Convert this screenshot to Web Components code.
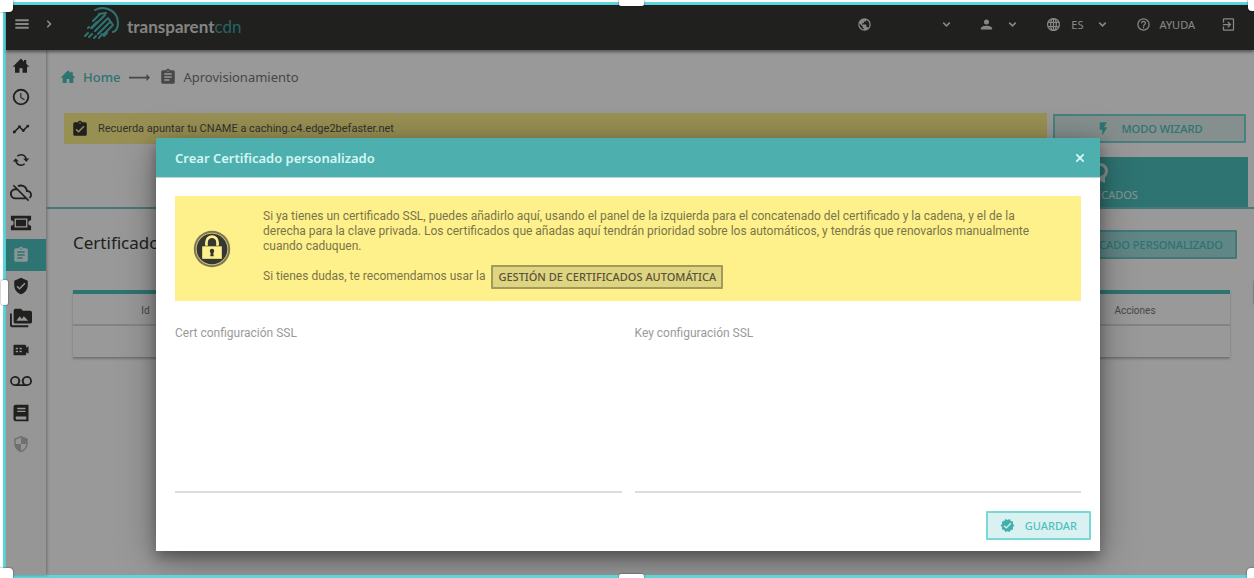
<!DOCTYPE html>
<html lang="es">
<head>
<meta charset="utf-8">
<meta name="viewport" content="width=device-width, initial-scale=1">
<title>Aprovisionamiento - transparentcdn</title>
<style>
html,body{margin:0;height:100%}
body{font-family:Roboto,"Noto Sans",sans-serif;background:#fff}
</style>
</head>
<body>
<cdn-app></cdn-app>
<script>
const ICONS={
menu:'<path d="M2 19h20v-3H2v3zm0-5.500h20v-3H2v3zM2 5v3h20V5H2z"/>',
right:'<path d="M8 16.600 12.600 12 8 7.400 10 5.400l6.600 6.600-6.600 6.600z"/>',
down:'<path d="M7 7.600 12 12.600l5-5 2 2-7 7-7-7z"/>',
home:'<path d="M10 21v-6h4v6h6v-8h3L19 9V4h-3v2.200L12 2 1 13h3v8z"/>',
clock:'<path d="M12 1a11 11 0 1 0 0 22 11 11 0 0 0 0-22zm0 19.500a8.500 8.500 0 1 1 0-17 8.500 8.500 0 0 1 0 17zm.5-14H11v6.500l5.200 3.200.8-1.300-4.500-2.700z"/>',
line:'<path d="M23 8a2 2 0 0 1-2.500 1.900L17 13.500a2 2 0 1 1-3.900 0L10.500 11a2 2 0 0 1-1 0L5 15.500A2 2 0 1 1 3.500 14L8 9.500a2 2 0 1 1 3.900 0l2.600 2.600a2 2 0 0 1 1 0L19 8.500A2 2 0 1 1 23 8z"/>',
sync:'<path d="M12 6a6 6 0 0 1 5.700 4H15l4 4.500 4-4.500h-3.200A8 8 0 0 0 6.500 6.200L8 7.600A6 6 0 0 1 12 6zM5 9.500 1 14h3.200a8 8 0 0 0 13.300 3.800L16 16.400A6 6 0 0 1 6.300 14H9z"/>',
cloudoff:'<path d="M19.400 10A7.500 7.500 0 0 0 8 5.100l1.500 1.500A5.500 5.500 0 0 1 17.500 11v1H19a3 3 0 0 1 1.500 5.600l1.400 1.400A5 5 0 0 0 19.400 10zM3 5.300 5.800 8A6 6 0 0 0 6 20h11.700l2 2 1.300-1.300L4.300 4zM7.700 10l8 8H6a4 4 0 0 1 0-8z"/>',
ticket:'<path d="M1 4h22v5a3 3 0 0 0 0 6v5H1v-5a3 3 0 0 0 0-6zm4 3v10h14V7zm1.500 1.500h11v7h-11z" fill-rule="evenodd"/>',
clip:'<path d="M19 3h-4.200a3 3 0 0 0-5.600 0H5a2 2 0 0 0-2 2v14c0 1.100.9 2 2 2h14a2 2 0 0 0 2-2V5a2 2 0 0 0-2-2zm-7 0a1 1 0 1 1 0 2 1 1 0 0 1 0-2zm2 14H7v-2h7zm3-4H7v-2h10zm0-4H7V7h10z"/>',
clipcheck:'<path d="M19 3h-4.200a3 3 0 0 0-5.600 0H5a2 2 0 0 0-2 2v14c0 1.100.9 2 2 2h14a2 2 0 0 0 2-2V5a2 2 0 0 0-2-2zm-7 0a1 1 0 1 1 0 2 1 1 0 0 1 0-2zm-2 14-4-4 1.400-1.400 2.600 2.600 6.600-6.600L18 9z"/>',
shield:'<path d="M12 1 3 5v6c0 5.500 3.800 10.700 9 12 5.200-1.300 9-6.500 9-12V5zm-2 16-4-4 1.400-1.400 2.600 2.600 6.600-6.600L18 9z"/>',
folders:'<path d="M2 7H0v13c0 1.100.9 2 2 2h18v-2H2zm20-3h-8l-2-2H6a2 2 0 0 0-2 2v12c0 1.100.9 2 2 2h16a2 2 0 0 0 2-2V6a2 2 0 0 0-2-2zM7 15l3.500-5 2.500 3 2-3 5 5z"/>',
video:'<path d="M3 5h14a2 2 0 0 1 2 2v2l3-2v10l-3-2v2a2 2 0 0 1-2 2H3a1 1 0 0 1-1-1V6a1 1 0 0 1 1-1zm2 4v2h3V9zm0 4v2h3v-2zm5-4v2h3V9zm0 4v2h3v-2z" fill-rule="evenodd"/>',
voice:'<path d="M18.500 6.500a5.500 5.500 0 0 0-4.400 9H9.900a5.500 5.500 0 1 0-4.400 2h13a5.500 5.500 0 0 0 0-11zm-13 9a3.500 3.500 0 1 1 0-7 3.500 3.500 0 0 1 0 7zm13 0a3.500 3.500 0 1 1 0-7 3.500 3.500 0 0 1 0 7z"/>',
book:'<path d="M5 1h17v22H5a3 3 0 0 1-3-3V4a3 3 0 0 1 3-3zm2 4v2h11V5zm0 4v1.500h11V9zM5 16.500v4h14v-4z" fill-rule="evenodd"/>',
quarter:'<path d="M12 1 3 5v6c0 5.500 3.800 10.700 9 12 5.200-1.300 9-6.500 9-12V5zm0 11h7c-.5 4.100-3.300 7.800-7 8.900V12H5V6.300l7-3.100z"/>',
earth:'<path d="M12 2a10 10 0 1 0 0 20 10 10 0 0 0 0-20zm-1 17.900A8 8 0 0 1 4.200 10.200L9 15v1c0 1.100.9 2 2 2zm6.900-2.500A2 2 0 0 0 16 16h-1v-3a1 1 0 0 0-1-1H8v-2h2a1 1 0 0 0 1-1V7h2a2 2 0 0 0 2-2v-.4a8 8 0 0 1 2.900 12.800z"/>',
person:'<path d="M12 12a4 4 0 1 0 0-8 4 4 0 0 0 0 8zm0 2c-3 0-9 1.300-9 4v2h18v-2c0-2.700-6-4-9-4z"/>',
globe:'<g fill="none" stroke="currentColor" stroke-width="2"><circle cx="12" cy="12" r="9.500"/><ellipse cx="12" cy="12" rx="4.500" ry="9.500"/><path d="M3 8.500h18M3 15.500h18M12 3v18"/></g>',
help:'<path d="M11 18h2v-2h-2zm1-16a10 10 0 1 0 0 20 10 10 0 0 0 0-20zm0 18a8 8 0 1 1 0-16 8 8 0 0 1 0 16zm0-14a4 4 0 0 0-4 4h2a2 2 0 1 1 4 0c0 2-3 1.800-3 5h2c0-2.300 3-2.500 3-5a4 4 0 0 0-4-4z"/>',
exit:'<path d="M10 15.600 11.500 17l5-5-5-5L10 8.400l2.700 2.600H3v2h9.700zM19 2H5a2 2 0 0 0-2 2v5h2V4h14v16H5v-5H3v5c0 1.100.9 2 2 2h14a2 2 0 0 0 2-2V4a2 2 0 0 0-2-2z"/>',
flash:'<path d="M6 2v12h4v9l8-13h-5l4-8z"/>',
close:'<path d="m18 7.400-1.400-1.400-4.600 4.600L7.400 6 6 7.400l4.600 4.600L6 16.600 7.400 18l4.600-4.600 4.600 4.600 1.400-1.400-4.600-4.600z" stroke="currentColor"/>',
check:'<path d="m23 12-2.400-2.800.3-3.700-3.600-.8-1.900-3.200L12 3 8.600 1.500 6.700 4.700l-3.600.8.3 3.700L1 12l2.400 2.800-.3 3.700 3.600.8 1.900 3.200L12 21l3.400 1.500 1.900-3.200 3.600-.8-.3-3.700zm-13 5-4-4 1.400-1.400 2.600 2.600 6.600-6.600L18 9z"/>',
arrow:'<path d="M0 11h20V8l4 4-4 4v-3H0z"/>',
lock:'<circle cx="12" cy="12" r="11.500" opacity=".65"/><circle cx="12" cy="12" r="10.300" fill="#fef18b" opacity=".6"/><circle cx="12" cy="12" r="9.700"/><path d="M8.500 10V7.700a3.500 3.500 0 0 1 7 0V10" fill="none" stroke="#fef18b" stroke-width="1.700"/><path d="M5.800 10.300h12.400v7.900H5.800z" fill="#fef18b"/><circle cx="12" cy="13.300" r="1.400"/><path d="M11.400 13h1.200l.5 3.500h-2.200z"/>',
seal:'<path d="M12 2a8 8 0 0 0-8 8c0 3 1.500 5 3 6.500V22l5-2 5 2v-5.500c1.500-1.500 3-3.500 3-6.500a8 8 0 0 0-8-8zm0 3a5 5 0 1 1 0 10 5 5 0 0 1 0-10z"/>'
};
function define(name,html){
  customElements.define(name,class extends HTMLElement{
    connectedCallback(){
      if(this.shadowRoot)return;
      const root=this.attachShadow({mode:'open'});
      const t=document.createElement('template');
      t.innerHTML=typeof html==='function'?html(this):html;
      root.append(t.content.cloneNode(true));
    }
  });
}

define('cdn-icon',el=>`<style>
:host{display:inline-flex;flex:none;width:var(--icon,16px);height:var(--icon,16px)}
svg{width:100%;height:100%;fill:currentColor}
</style><svg viewBox="0 0 24 24" aria-hidden="true">${ICONS[el.getAttribute('name')]}</svg>`);

define('cdn-button',`<style>
:host{display:flex}
button{flex:1;display:flex;align-items:center;justify-content:center;gap:10px;box-sizing:border-box;
height:var(--h,29px);padding:0 var(--pad,12px);border:2px solid var(--line,#79d8d5);border-radius:1px;
background:var(--fill,#d9f2f1);color:var(--ink,#4dc1be);font:500 11px "Noto Sans",sans-serif;white-space:nowrap}
</style><button type="button"><slot name="icon"></slot><slot></slot></button>`);

define('cdn-logo',`<style>
:host{display:block}
a{display:flex;align-items:center;gap:7px;text-decoration:none;color:#ddd;font:700 17px Lato,sans-serif}
svg{width:36px;height:36px;fill:none;stroke:#4dc1be;stroke-linecap:round}
span{padding-top:4px}
b{font-weight:400;color:#3fa5a2}
</style><a href="#"><svg viewBox="0 0 36 36" aria-hidden="true">
<path d="M11 4C20-1 34 4 34 17c0 5-2 8-5 9" stroke-width="2"/>
<path d="m16 8-7 7M21 9 8 22M23 13 11 25M26 16 14 28M28 20l-9 9M13 16l-6 6" stroke-width="2"/>
<path d="m5 21-1 1m0 5-3 3m7-2-3 3m7-1-2 2m8-4-3 4m8-5-3 3" stroke-width="2"/>
<path d="m15 8 7-1m2 5 5 7" stroke-width="2"/></svg><span>transparent<b>cdn</b></span></a>`);

define('cdn-topbar',`<style>
:host{display:block;height:45px;background:#363632;color:#e2e2e2;box-shadow:0 2px 3px rgba(0,0,0,.45);position:relative}
header{display:flex;align-items:center;height:38px;padding:0 18px 0 8px}
button{display:flex;align-items:center;padding:0;border:0;background:none;color:inherit;font:11px "Noto Sans",sans-serif}
.nav{margin-left:12px;--icon:14px}
cdn-logo{margin-left:28px}
.right{display:flex;align-items:center;margin-left:auto;--icon:15px}
cdn-icon[name=down]{--icon:13px}
.site{gap:68px;margin-right:26px}.user{gap:12px;margin-right:27px}
.lang{gap:10px;margin-right:27px}.lang cdn-icon[name=down]{margin-left:2px}
.help{gap:9px;margin-right:26px}
</style><header>
<button aria-label="Menú"><cdn-icon name="menu"></cdn-icon></button>
<button class="nav" aria-label="Expandir"><cdn-icon name="right"></cdn-icon></button>
<cdn-logo></cdn-logo>
<div class="right">
<button class="site" aria-label="Sitio"><cdn-icon name="earth"></cdn-icon><cdn-icon name="down"></cdn-icon></button>
<button class="user" aria-label="Usuario"><cdn-icon name="person"></cdn-icon><cdn-icon name="down"></cdn-icon></button>
<button class="lang"><cdn-icon name="globe"></cdn-icon>ES<cdn-icon name="down"></cdn-icon></button>
<button class="help"><cdn-icon name="help"></cdn-icon>AYUDA</button>
<button aria-label="Salir"><cdn-icon name="exit"></cdn-icon></button>
</div></header>`);

const NAV=[['home','Inicio'],['clock','Historial'],['line','Estadísticas'],['sync','Actualizar'],['cloudoff','Invalidar'],['ticket','Tickets'],['clip','Aprovisionamiento'],['shield','Seguridad'],['folders','Medios'],['video','Vídeo'],['voice','Grabaciones'],['book','Documentación'],['quarter','Protección']];
define('cdn-sidebar',`<style>
:host{display:block;width:40px;flex:none;background:#fafafa;color:#363632;box-shadow:1px 0 3px rgba(0,0,0,.3)}
nav{display:flex;flex-direction:column;height:410px}
a{flex:1;display:flex;align-items:center;justify-content:center;padding-right:10px;color:inherit;--icon:18px}
a.on{background:#4dc1be;color:#e6faf9}
a:last-child{color:#bbb}
a.wide{--icon:22px}
</style><nav>${NAV.map(([i,l])=>`<a href="#" aria-label="${l}" class="${i==='clip'?'on':['ticket','voice','cloudoff','folders'].includes(i)?'wide':''}"><cdn-icon name="${i}"></cdn-icon></a>`).join('')}</nav>`);

define('cdn-breadcrumb',`<style>
:host{display:block}
nav{display:flex;align-items:center;gap:6px;height:18px;font:13px "Noto Sans",sans-serif;color:#777}
a{display:flex;align-items:center;gap:7px;color:#4dc1be;font-weight:500;text-decoration:none}
cdn-icon[name=arrow]{--icon:21px;margin:0 3px}
cdn-icon[name=clip]{--icon:18px}
</style><nav aria-label="Ruta"><a href="#"><cdn-icon name="home"></cdn-icon>Home</a><cdn-icon name="arrow"></cdn-icon><cdn-icon name="clip"></cdn-icon><span>Aprovisionamiento</span></nav>`);

define('cdn-alert',`<style>
:host{display:flex;align-items:center;gap:9px;background:#fef18b;color:#55554a;font-size:11px;padding:0 7px;--icon:18px}
cdn-icon{color:#363632}
</style><cdn-icon name="clipcheck"></cdn-icon><slot></slot>`);

define('cdn-tabs',`<style>
:host{display:flex;justify-content:flex-end;border-bottom:2px solid #79c9c7;padding-right:6px}
button{width:296px;height:50px;padding:0;border:0;background:#4dc1be;color:#e6faf9;display:flex;flex-direction:column;align-items:center;justify-content:center;gap:2px;font:11px/16px "Noto Sans",sans-serif;--icon:24px}
</style><button><cdn-icon name="seal"></cdn-icon>CERTIFICADOS</button>`);

define('cdn-table',`<style>
:host{display:block}
table{width:100%;border-collapse:collapse;border-top:4px solid #4dc1be;font-size:10px;color:#777;box-shadow:0 2px 2px rgba(0,0,0,.25)}
th{height:33px;padding:3px 0 0;font-weight:400;box-sizing:border-box;border-bottom:2px solid #ddd}
th:first-child{width:145px}th:last-child{width:190px}
td{height:31px;padding:0}
</style><table><thead><tr><th scope="col">Id</th><th></th><th scope="col">Acciones</th></tr></thead><tbody><tr><td></td><td></td><td></td></tr></tbody></table>`);

define('cdn-field',el=>`<style>
:host{display:flex;flex-direction:column;flex:1}
label{font-size:12px;line-height:16px;color:#9a9a9a}
textarea{width:100%;height:152px;box-sizing:border-box;border:0;border-bottom:2px solid #ddd;background:none;resize:none;outline:0;padding:4px 0;font:12px Roboto,sans-serif}
</style><label for="f">${el.getAttribute('label')}</label><textarea id="f"></textarea>`);

define('cdn-modal',`<style>
:host{display:block;background:#fff;box-shadow:0 6px 12px rgba(0,0,0,.3),0 8px 36px rgba(0,0,0,.35)}
header{display:flex;align-items:center;justify-content:space-between;height:39px;padding:0 12px 0 19px;background:#4dafae;color:#d5f7f5;border-bottom:1px solid #b9d4d3}
h2{margin:0;font:600 13px "Noto Sans",sans-serif}
header button{display:flex;padding:0;border:0;background:none;color:inherit;--icon:16px}
section{padding:18px 19px 0}
.note{display:flex;align-items:center;background:#fef18b;color:#7a744a;height:105px;padding-left:18px;font-size:12px;line-height:15px}
.note>cdn-icon{--icon:38px;color:#363632;margin-right:32px}
p{margin:0}
.ask{display:flex;align-items:center;gap:6px;margin-top:11px}
.ask cdn-button{--h:24px;--pad:5px;--line:#a09a5c;--fill:#dfd480;--ink:#57533a}
.fields{display:flex;gap:13px;padding-top:24px}
footer{display:flex;justify-content:flex-end;padding:18px 9px 11px}
footer cdn-icon{color:#43b0ad;--icon:15px}
</style><header><h2><slot name="title"></slot></h2><button aria-label="Cerrar"><cdn-icon name="close"></cdn-icon></button></header>
<section><div class="note"><cdn-icon name="lock"></cdn-icon><div>
<p>Si ya tienes un certificado SSL, puedes añadirlo aquí, usando el panel de la izquierda para el concatenado del certificado y la cadena, y el de la<br>derecha para la clave privada. Los certificados que añadas aquí tendrán prioridad sobre los automáticos, y tendrás que renovarlos manualmente<br>cuando caduquen.</p>
<div class="ask">Si tienes dudas, te recomendamos usar la <cdn-button>GESTIÓN DE CERTIFICADOS AUTOMÁTICA</cdn-button></div></div></div>
<div class="fields"><cdn-field label="Cert configuración SSL"></cdn-field><cdn-field label="Key configuración SSL"></cdn-field></div></section>
<footer><cdn-button><cdn-icon slot="icon" name="check"></cdn-icon>GUARDAR</cdn-button></footer>`);

define('cdn-frame',`<style>
:host{display:block;box-sizing:border-box;position:relative;border:solid #5cd6dc;border-width:3px 0 3px 3px;margin-left:3px}
i{position:absolute;background:#fff;box-shadow:0 0 2px rgba(0,0,0,.6);z-index:5}
.tl{left:-9px;top:-9px;width:16px;height:16px;border-radius:4px}
.tr{right:-6px;top:-9px;width:12px;height:15px;border-radius:4px}
.bl{left:-9px;bottom:-9px;width:16px;height:16px;border-radius:4px}
.br{right:-6px;bottom:-9px;width:13px;height:16px;border-radius:4px}
.t,.b{left:calc(50% - 11px);width:25px;height:10px;border-radius:2px}
.t{top:-9px}.b{bottom:-9px}
.l{left:-5px;top:calc(50% - 10px);width:7px;height:25px;border-radius:2px}
.r{right:-6px;top:calc(50% - 10px);width:6px;height:25px;border-radius:2px}
</style><slot></slot><i class="tl"></i><i class="tr"></i><i class="bl"></i><i class="br"></i><i class="t"></i><i class="b"></i><i class="l"></i><i class="r"></i>`);

define('cdn-app',`<style>
:host{display:block;padding-top:2px;box-sizing:border-box;height:100vh;overflow:hidden}
cdn-frame{min-height:calc(100vh - 2px)}
.page{display:flex;flex-direction:column;min-height:calc(100vh - 8px);background:#fff}
cdn-topbar{z-index:1}
.body{display:flex;flex:1}
main{flex:1;padding-top:18px}
cdn-breadcrumb{padding-left:14px}
.row{display:flex;gap:6px;padding:27px 8px 0 18px}
.row cdn-alert{flex:1;height:31px}
.row cdn-button{width:193px;--fill:#dceeed;margin-top:1px;--icon:15px}
cdn-tabs{margin-top:13px}
.head{display:flex;align-items:center;justify-content:space-between;padding:21px 17px 0 27px}
h1{margin:0;font:17px/24px "Noto Sans",sans-serif;color:#363632;padding-bottom:3px}
.head cdn-button{--fill:#a0e0de;--line:#70c8c6}
cdn-table{margin:31px 24px 0 27px}
.backdrop{position:absolute;inset:0;background:rgba(0,0,0,.4);box-sizing:border-box;padding:133px 154px 0 150px;z-index:2;overflow:hidden}
</style><cdn-frame><div class="page"><cdn-topbar></cdn-topbar><div class="body"><cdn-sidebar></cdn-sidebar>
<main><cdn-breadcrumb></cdn-breadcrumb>
<div class="row"><cdn-alert>Recuerda apuntar tu CNAME a caching.c4.edge2befaster.net</cdn-alert><cdn-button><cdn-icon slot="icon" name="flash"></cdn-icon>MODO WIZARD</cdn-button></div>
<cdn-tabs></cdn-tabs>
<div class="head"><h1>Certificados</h1><cdn-button>CERTIFICADO PERSONALIZADO</cdn-button></div>
<cdn-table></cdn-table></main></div></div>
<div class="backdrop"><cdn-modal role="dialog" aria-modal="true"><span slot="title">Crear Certificado personalizado</span></cdn-modal></div></cdn-frame>`);
</script>
</body>
</html>
